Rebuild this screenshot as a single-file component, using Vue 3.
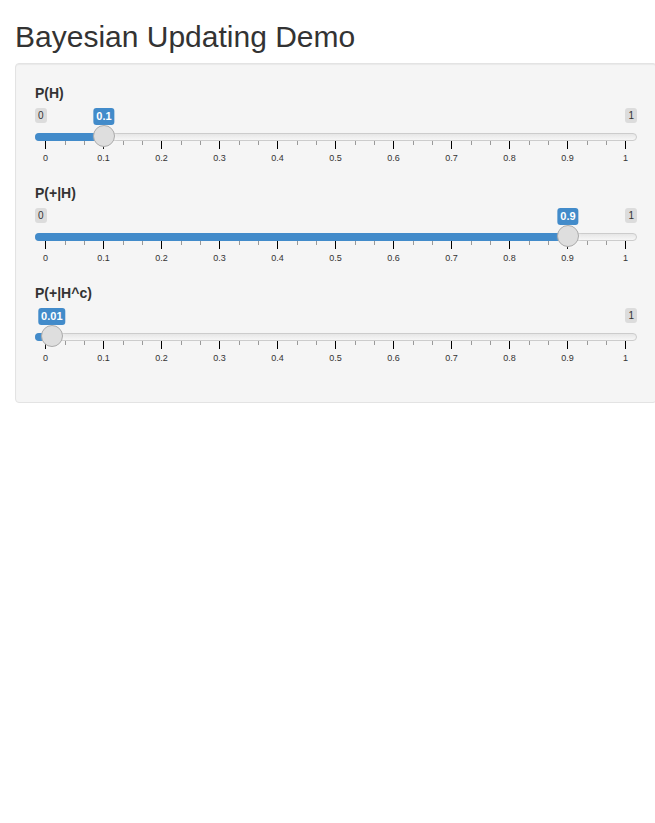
<script setup>
import { reactive } from 'vue'

const sliders = reactive([
  { id: 'prior', label: 'P(H)', value: 0.1 },
  { id: 'sensitivity', label: 'P(+|H)', value: 0.9 },
  { id: 'false-positive', label: 'P(+|H^c)', value: 0.01 },
])

const marks = [0, 0.1, 0.2, 0.3, 0.4, 0.5, 0.6, 0.7, 0.8, 0.9, 1]
</script>

<template>
  <main class="page">
    <h2 class="title">Bayesian Updating Demo</h2>
    <form class="well" @submit.prevent>
      <div v-for="s in sliders" :key="s.id" class="group" :style="{ '--value': s.value }">
        <label class="name" :for="s.id">{{ s.label }}</label>
        <div class="tags">
          <span class="limit" :class="{ covered: s.value < 0.05 }">0</span>
          <span class="limit" :class="{ covered: s.value > 0.95 }">1</span>
          <output class="current" :for="s.id">{{ s.value }}</output>
        </div>
        <div class="control">
          <div class="line"></div>
          <div class="fill"></div>
          <input :id="s.id" v-model.number="s.value" type="range" min="0" max="1" step="0.01" />
        </div>
        <div class="scale" aria-hidden="true">
          <div class="ticks">
            <div v-for="n in 10" :key="n" class="segment">
              <i class="tick major"></i>
              <i class="tick"></i>
              <i class="tick"></i>
            </div>
            <i class="tick major"></i>
          </div>
          <div class="marks">
            <span v-for="m in marks" :key="m" class="mark">{{ m }}</span>
          </div>
        </div>
      </div>
    </form>
  </main>
</template>

<style>
body {
  margin: 0;
  background: #fff;
}
</style>

<style scoped>
.page {
  padding: 20px 0 20px 15px;
  overflow-x: hidden;
  font-family: "Liberation Sans", Arial, sans-serif;
  font-size: 14px;
  line-height: 20px;
  color: #333;
}

.title {
  margin: 0 0 10px;
  font-size: 30px;
  font-weight: 500;
  line-height: 33px;
}

.well {
  margin-right: -2px;
  padding: 19px 19px 4px;
  border: 1px solid #e3e3e3;
  border-radius: 4px;
  background: #f5f5f5;
  box-shadow: inset 0 1px 1px rgba(0, 0, 0, 0.05);
}

.group {
  margin-bottom: 15px;
  padding-bottom: 5px;
}

.group:last-child {
  margin-bottom: 30px;
}

.name {
  display: block;
  margin-bottom: 5px;
  font-weight: 700;
}

.tags {
  position: relative;
  display: flex;
  justify-content: space-between;
  align-items: flex-start;
  height: 17px;
}

.limit {
  padding: 0 3px;
  border-radius: 3px;
  background: #dcdcdc;
  font-size: 10px;
  line-height: 15px;
}

.limit.covered {
  visibility: hidden;
}

.current {
  position: absolute;
  top: 0;
  left: calc(11px + (100% - 22px) * var(--value));
  padding: 0 3px;
  border-radius: 3px;
  background: #428bca;
  color: #fff;
  font-size: 11px;
  font-weight: 700;
  line-height: 17px;
  transform: translateX(-50%);
}

.control {
  position: relative;
  z-index: 1;
  display: grid;
  height: 22px;
}

.control > * {
  grid-area: 1 / 1;
}

.line,
.fill {
  box-sizing: border-box;
  height: 8px;
  margin-top: 8px;
}

.line {
  border: 1px solid #ccc;
  border-radius: 8px;
  background: linear-gradient(to bottom, #dedede -50%, #fff 150%);
}

.fill {
  width: calc(11px + (100% - 22px) * var(--value));
  border-radius: 8px 0 0 8px;
  background: #428bca;
}

input {
  appearance: none;
  width: 100%;
  height: 22px;
  margin: 0;
  background: transparent;
  cursor: pointer;
}

input::-webkit-slider-runnable-track {
  height: 22px;
  background: transparent;
}

input::-webkit-slider-thumb {
  appearance: none;
  box-sizing: border-box;
  width: 22px;
  height: 22px;
  border: 1px solid #ababab;
  border-radius: 50%;
  background: #dedede;
  box-shadow: 1px 1px 3px rgba(255, 255, 255, 0.3);
}

.scale {
  margin: -6px 11px 0 10px;
}

.ticks {
  display: flex;
  height: 8px;
  margin-bottom: 5px;
}

.segment {
  flex: 1;
  display: grid;
  grid-template-columns: 20fr 19fr 19fr;
}

.tick {
  width: 1px;
  height: 4px;
  background: #999;
}

.tick.major {
  height: 8px;
  background: #000;
}

.marks {
  display: flex;
  justify-content: space-between;
  font-size: 9px;
  line-height: 9px;
}

.mark {
  display: flex;
  justify-content: center;
  width: 1px;
}
</style>
